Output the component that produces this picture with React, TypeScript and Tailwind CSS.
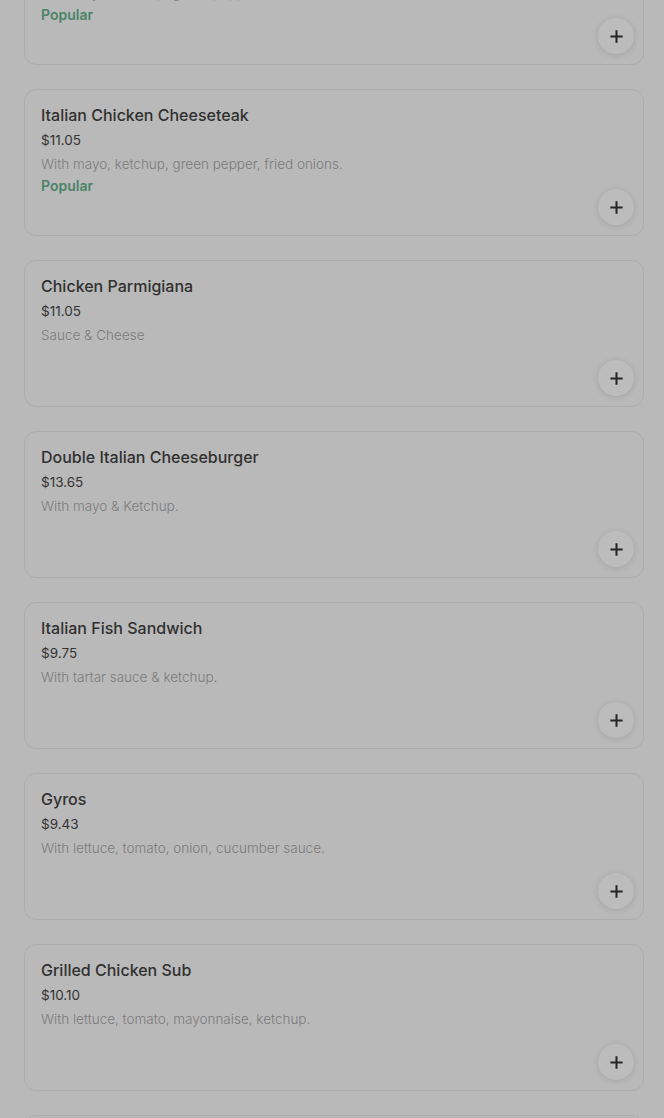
const items = [
  { name: 'Italian Cheesesteak', price: '$10.50', desc: 'With mayo, ketchup, green pepper, fried onions.', popular: true },
  { name: 'Italian Chicken Cheeseteak', price: '$11.05', desc: 'With mayo, ketchup, green pepper, fried onions.', popular: true },
  { name: 'Chicken Parmigiana', price: '$11.05', desc: 'Sauce & Cheese', popular: false },
  { name: 'Double Italian Cheeseburger', price: '$13.65', desc: 'With mayo & Ketchup.', popular: false },
  { name: 'Italian Fish Sandwich', price: '$9.75', desc: 'With tartar sauce & ketchup.', popular: false },
  { name: 'Gyros', price: '$9.43', desc: 'With lettuce, tomato, onion, cucumber sauce.', popular: false },
  { name: 'Grilled Chicken Sub', price: '$10.10', desc: 'With lettuce, tomato, mayonnaise, ketchup.', popular: false },
  { name: 'Philly Cheesesteak', price: '$10.95', desc: 'With onions, peppers, mushrooms.', popular: false },
];

const PlusIcon = () => (
  <svg width="13" height="13" viewBox="0 0 14 14" fill="none">
    <path d="M7 1.5v11M1.5 7h11" stroke="#262626" strokeWidth="2.2" strokeLinecap="square" />
  </svg>
);

const MenuCard = ({ item }: { item: (typeof items)[number] }) => {
  return (
    <div className="relative flex h-[147px] shrink-0 flex-col rounded-[12px] border border-[#acacac] bg-[#b9b9b9] pt-[15px] pl-[16px] pr-[9px]">
      <h3 className="text-[16px] leading-[20px] font-medium text-[#303030]">{item.name}</h3>
      <p className="mt-[5px] text-[13.5px] leading-[20px] text-[#343434]">{item.price}</p>
      <p className="mt-[4px] text-[13.5px] leading-[20px] font-light text-[#7b7b7b]">{item.desc}</p>
      {item.popular && (
        <p className="mt-[2px] text-[14px] leading-[20px] font-semibold text-[#4b8468]">Popular</p>
      )}
      <button className="absolute right-[9px] bottom-[10px] flex h-[36px] w-[36px] items-center justify-center rounded-full bg-[#bcbcbc] shadow-[0_1px_6px_rgba(0,0,0,0.12)]">
        <PlusIcon />
      </button>
    </div>
  );
};

export default function App() {
  return (
    <div className="h-[1118px] overflow-hidden bg-[#b9b9b9]" style={{ fontFamily: 'Inter, "Noto Sans", sans-serif' }}>
      <div className="-mt-[82px] flex flex-col gap-[24px] px-[24px] pr-[20px]">
        {items.map((item) => (
          <MenuCard key={item.name} item={item} />
        ))}
      </div>
    </div>
  );
}
